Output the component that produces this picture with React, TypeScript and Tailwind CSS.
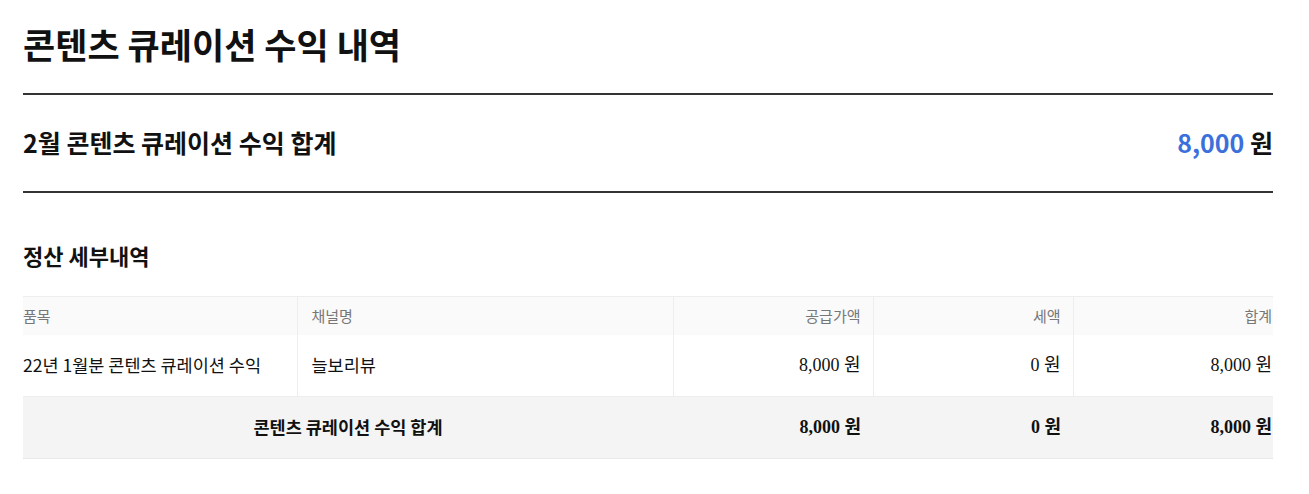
const sans = "font-['Noto_Sans_CJK_KR','Noto_Sans',sans-serif]";
const num = "font-['Liberation_Serif','Noto_Sans_CJK_KR',serif] text-[18px]";

interface Row {
  item: string;
  channel: string;
  supply: string;
  tax: string;
  total: string;
}

const rows: Row[] = [
  { item: '22년 1월분 콘텐츠 큐레이션 수익', channel: '늘보리뷰', supply: '8,000', tax: '0', total: '8,000' },
];

export default function App() {
  return (
    <div className={`${sans} min-h-screen bg-white px-[23px] pt-[18px] text-[#111]`}>
      <div className="w-[1250px]">
        {/* Title */}
        <h1 className="text-[35px] font-bold leading-[52px]">콘텐츠 큐레이션 수익 내역</h1>

        {/* Summary */}
        <div className="mt-[23px] flex h-[100px] items-center justify-between border-y-2 border-[#333]">
          <h2 className="text-[25px] font-bold">2월 콘텐츠 큐레이션 수익 합계</h2>
          <div className="text-[25px] font-bold">
            <span className="text-[#3b6fdc]">8,000</span> <span>원</span>
          </div>
        </div>

        {/* Detail */}
        <h3 className="mt-[46px] text-[22px] font-bold leading-[32px]">정산 세부내역</h3>

        <table className="mt-[25px] w-full table-fixed border-collapse">
          <colgroup>
            <col className="w-[274px]" />
            <col className="w-[376px]" />
            <col className="w-[200px]" />
            <col className="w-[200px]" />
            <col className="w-[200px]" />
          </colgroup>
          <thead>
            <tr className="h-[38px] border-t border-[#eee] bg-[#fafafa] text-[15px] text-[#777]">
              <th className="border-r border-[#eee] pl-0 text-left font-normal">품목</th>
              <th className="border-r border-[#eee] pl-[14px] text-left font-normal">채널명</th>
              <th className="border-r border-[#eee] pr-[12px] text-right font-normal">공급가액</th>
              <th className="border-r border-[#eee] pr-[12px] text-right font-normal">세액</th>
              <th className="pr-[1px] text-right font-normal">합계</th>
            </tr>
          </thead>
          <tbody>
            {rows.map((r) => (
              <tr key={r.item} className="h-[62px] border-b border-[#eee] text-[17.5px] text-[#111]">
                <td className="border-r border-[#eee] pl-0">{r.item}</td>
                <td className="border-r border-[#eee] pl-[14px]">{r.channel}</td>
                <td className={`${num} border-r border-[#eee] pr-[12px] text-right`}>{r.supply} 원</td>
                <td className={`${num} border-r border-[#eee] pr-[12px] text-right`}>{r.tax} 원</td>
                <td className={`${num} pr-[1px] text-right`}>{r.total} 원</td>
              </tr>
            ))}
            <tr className="h-[62px] border-b border-[#e8e8e8] bg-[#f4f4f4] text-[17.5px] font-bold">
              <td colSpan={2} className="text-center">콘텐츠 큐레이션 수익 합계</td>
              <td className={`${num} pr-[12px] text-right`}>8,000 원</td>
              <td className={`${num} pr-[12px] text-right`}>0 원</td>
              <td className={`${num} pr-[1px] text-right`}>8,000 원</td>
            </tr>
          </tbody>
        </table>
      </div>
    </div>
  );
}
